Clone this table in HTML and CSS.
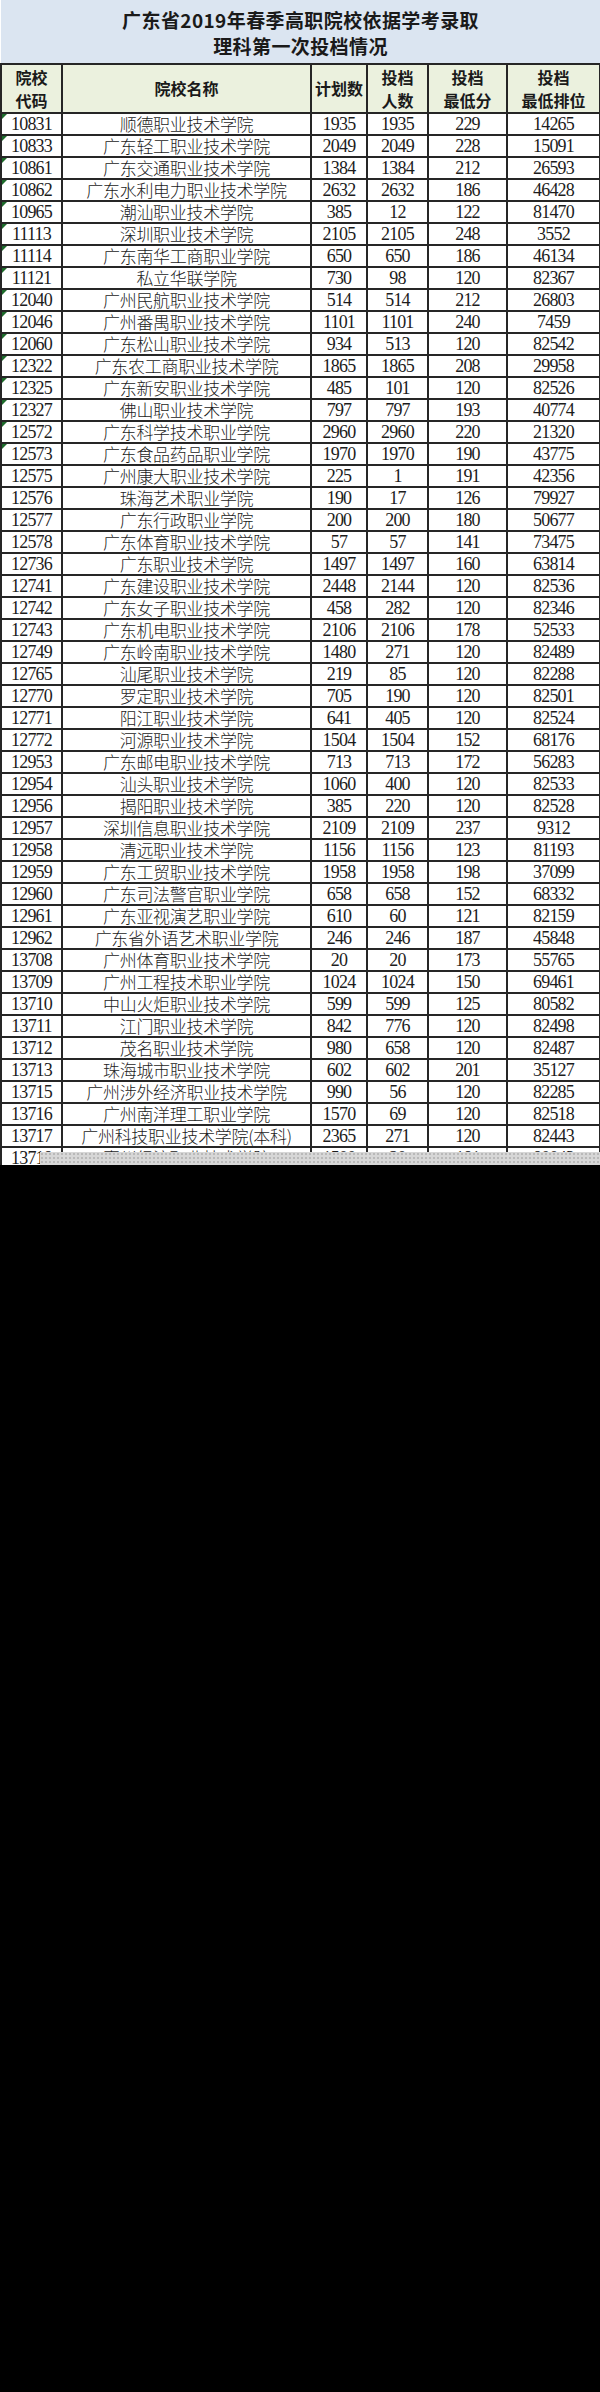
FILE: index.html
```html
<!DOCTYPE html>
<html lang="zh">
<head>
<meta charset="utf-8">
<title>广东省2019年春季高职院校依据学考录取 理科第一次投档情况</title>
<link rel="stylesheet" href="styles.css">
</head>
<body>
<div class="sheet">
<table class="grid">
<colgroup>
<col class="c1"><col class="c2"><col class="c3"><col class="c4"><col class="c5"><col class="c6">
</colgroup>
<thead>
<tr class="title"><th colspan="6"><div class="tline">广东省2019年春季高职院校依据学考录取</div><div class="tline">理科第一次投档情况</div></th></tr>
<tr class="head">
<th>院校<br>代码</th><th>院校名称</th><th>计划数</th><th>投档<br>人数</th><th>投档<br>最低分</th><th>投档<br>最低排位</th>
</tr>
</thead>
<tbody>
<tr><td class="code flag">10831</td><td class="name">顺德职业技术学院</td><td>1935</td><td>1935</td><td>229</td><td>14265</td></tr>
<tr><td class="code flag">10833</td><td class="name">广东轻工职业技术学院</td><td>2049</td><td>2049</td><td>228</td><td>15091</td></tr>
<tr><td class="code flag">10861</td><td class="name">广东交通职业技术学院</td><td>1384</td><td>1384</td><td>212</td><td>26593</td></tr>
<tr><td class="code flag">10862</td><td class="name">广东水利电力职业技术学院</td><td>2632</td><td>2632</td><td>186</td><td>46428</td></tr>
<tr><td class="code flag">10965</td><td class="name">潮汕职业技术学院</td><td>385</td><td>12</td><td>122</td><td>81470</td></tr>
<tr><td class="code flag">11113</td><td class="name">深圳职业技术学院</td><td>2105</td><td>2105</td><td>248</td><td>3552</td></tr>
<tr><td class="code flag">11114</td><td class="name">广东南华工商职业学院</td><td>650</td><td>650</td><td>186</td><td>46134</td></tr>
<tr><td class="code flag">11121</td><td class="name">私立华联学院</td><td>730</td><td>98</td><td>120</td><td>82367</td></tr>
<tr><td class="code flag">12040</td><td class="name">广州民航职业技术学院</td><td>514</td><td>514</td><td>212</td><td>26803</td></tr>
<tr><td class="code flag">12046</td><td class="name">广州番禺职业技术学院</td><td>1101</td><td>1101</td><td>240</td><td>7459</td></tr>
<tr><td class="code flag">12060</td><td class="name">广东松山职业技术学院</td><td>934</td><td>513</td><td>120</td><td>82542</td></tr>
<tr><td class="code flag">12322</td><td class="name">广东农工商职业技术学院</td><td>1865</td><td>1865</td><td>208</td><td>29958</td></tr>
<tr><td class="code flag">12325</td><td class="name">广东新安职业技术学院</td><td>485</td><td>101</td><td>120</td><td>82526</td></tr>
<tr><td class="code flag">12327</td><td class="name">佛山职业技术学院</td><td>797</td><td>797</td><td>193</td><td>40774</td></tr>
<tr><td class="code flag">12572</td><td class="name">广东科学技术职业学院</td><td>2960</td><td>2960</td><td>220</td><td>21320</td></tr>
<tr><td class="code flag">12573</td><td class="name">广东食品药品职业学院</td><td>1970</td><td>1970</td><td>190</td><td>43775</td></tr>
<tr><td class="code">12575</td><td class="name">广州康大职业技术学院</td><td>225</td><td>1</td><td>191</td><td>42356</td></tr>
<tr><td class="code">12576</td><td class="name">珠海艺术职业学院</td><td>190</td><td>17</td><td>126</td><td>79927</td></tr>
<tr><td class="code">12577</td><td class="name">广东行政职业学院</td><td>200</td><td>200</td><td>180</td><td>50677</td></tr>
<tr><td class="code">12578</td><td class="name">广东体育职业技术学院</td><td>57</td><td>57</td><td>141</td><td>73475</td></tr>
<tr><td class="code">12736</td><td class="name">广东职业技术学院</td><td>1497</td><td>1497</td><td>160</td><td>63814</td></tr>
<tr><td class="code">12741</td><td class="name">广东建设职业技术学院</td><td>2448</td><td>2144</td><td>120</td><td>82536</td></tr>
<tr><td class="code">12742</td><td class="name">广东女子职业技术学院</td><td>458</td><td>282</td><td>120</td><td>82346</td></tr>
<tr><td class="code">12743</td><td class="name">广东机电职业技术学院</td><td>2106</td><td>2106</td><td>178</td><td>52533</td></tr>
<tr><td class="code">12749</td><td class="name">广东岭南职业技术学院</td><td>1480</td><td>271</td><td>120</td><td>82489</td></tr>
<tr><td class="code">12765</td><td class="name">汕尾职业技术学院</td><td>219</td><td>85</td><td>120</td><td>82288</td></tr>
<tr><td class="code">12770</td><td class="name">罗定职业技术学院</td><td>705</td><td>190</td><td>120</td><td>82501</td></tr>
<tr><td class="code">12771</td><td class="name">阳江职业技术学院</td><td>641</td><td>405</td><td>120</td><td>82524</td></tr>
<tr><td class="code">12772</td><td class="name">河源职业技术学院</td><td>1504</td><td>1504</td><td>152</td><td>68176</td></tr>
<tr><td class="code">12953</td><td class="name">广东邮电职业技术学院</td><td>713</td><td>713</td><td>172</td><td>56283</td></tr>
<tr><td class="code">12954</td><td class="name">汕头职业技术学院</td><td>1060</td><td>400</td><td>120</td><td>82533</td></tr>
<tr><td class="code">12956</td><td class="name">揭阳职业技术学院</td><td>385</td><td>220</td><td>120</td><td>82528</td></tr>
<tr><td class="code">12957</td><td class="name">深圳信息职业技术学院</td><td>2109</td><td>2109</td><td>237</td><td>9312</td></tr>
<tr><td class="code">12958</td><td class="name">清远职业技术学院</td><td>1156</td><td>1156</td><td>123</td><td>81193</td></tr>
<tr><td class="code">12959</td><td class="name">广东工贸职业技术学院</td><td>1958</td><td>1958</td><td>198</td><td>37099</td></tr>
<tr><td class="code">12960</td><td class="name">广东司法警官职业学院</td><td>658</td><td>658</td><td>152</td><td>68332</td></tr>
<tr><td class="code">12961</td><td class="name">广东亚视演艺职业学院</td><td>610</td><td>60</td><td>121</td><td>82159</td></tr>
<tr><td class="code">12962</td><td class="name">广东省外语艺术职业学院</td><td>246</td><td>246</td><td>187</td><td>45848</td></tr>
<tr><td class="code">13708</td><td class="name">广州体育职业技术学院</td><td>20</td><td>20</td><td>173</td><td>55765</td></tr>
<tr><td class="code">13709</td><td class="name">广州工程技术职业学院</td><td>1024</td><td>1024</td><td>150</td><td>69461</td></tr>
<tr><td class="code">13710</td><td class="name">中山火炬职业技术学院</td><td>599</td><td>599</td><td>125</td><td>80582</td></tr>
<tr><td class="code">13711</td><td class="name">江门职业技术学院</td><td>842</td><td>776</td><td>120</td><td>82498</td></tr>
<tr><td class="code">13712</td><td class="name">茂名职业技术学院</td><td>980</td><td>658</td><td>120</td><td>82487</td></tr>
<tr><td class="code">13713</td><td class="name">珠海城市职业技术学院</td><td>602</td><td>602</td><td>201</td><td>35127</td></tr>
<tr><td class="code">13715</td><td class="name">广州涉外经济职业技术学院</td><td>990</td><td>56</td><td>120</td><td>82285</td></tr>
<tr><td class="code">13716</td><td class="name">广州南洋理工职业学院</td><td>1570</td><td>69</td><td>120</td><td>82518</td></tr>
<tr><td class="code">13717</td><td class="name">广州科技职业技术学院(本科)</td><td>2365</td><td>271</td><td>120</td><td>82443</td></tr>
<tr><td class="code">13718</td><td class="name">惠州经济职业技术学院</td><td>1500</td><td>20</td><td>181</td><td>80043</td></tr>
</tbody>
</table>
<div class="loading"></div>
</div>
</body>
</html>
```
FILE: styles.css
```css
html, body {
  margin: 0;
  padding: 0;
  background: #000;
}

.sheet {
  position: relative;
  width: 600px;
  height: 1165px;
  overflow: hidden;
  background: #fff;
}

.grid {
  width: 599px;
  border-collapse: collapse;
  table-layout: fixed;
  font-family: "Liberation Serif", "Noto Sans CJK SC", serif;
  color: #1c1c1c;
}

.c1 { width: 61px; }
.c2 { width: 249px; }
.c3 { width: 56px; }
.c4 { width: 61px; }
.c5 { width: 79px; }
.c6 { width: 93px; }

.grid th,
.grid td {
  border: 2px solid #262626;
  padding: 0;
  text-align: center;
  vertical-align: middle;
  white-space: nowrap;
}

.title th {
  height: 60px;
  background: #dbe5f1;
  border-top: none;
  border-left: none;
  border-right: none;
  font-family: "Noto Sans CJK SC", sans-serif;
  font-weight: 700;
  font-size: 19px;
  letter-spacing: 0.4px;
  color: #1a1a1a;
  padding-top: 3px;
}

.tline {
  line-height: 26px;
}

.head th {
  height: 47px;
  background: #ebf1de;
  font-family: "Noto Sans CJK SC", sans-serif;
  font-weight: 700;
  font-size: 16px;
  line-height: 23px;
  color: #1a1a1a;
}

.grid td {
  height: 20px;
  font-size: 18px;
  line-height: 20px;
  letter-spacing: -0.8px;
}

.grid td.name {
  font-family: "Noto Sans CJK SC", sans-serif;
  font-weight: 300;
  font-size: 17px;
  letter-spacing: -0.3px;
}

.grid td.code {
  position: relative;
}

.grid td.flag::before {
  content: "";
  position: absolute;
  left: 0;
  top: 0;
  border-top: 5px solid #1d6b2b;
  border-right: 5px solid transparent;
}

.loading {
  position: absolute;
  left: 40px;
  top: 1152px;
  width: 560px;
  height: 13px;
  background-color: #d7d7d7;
  background-image: radial-gradient(circle, #b9b9b9 0.8px, transparent 1.2px);
  background-size: 4px 4px;
}
```
